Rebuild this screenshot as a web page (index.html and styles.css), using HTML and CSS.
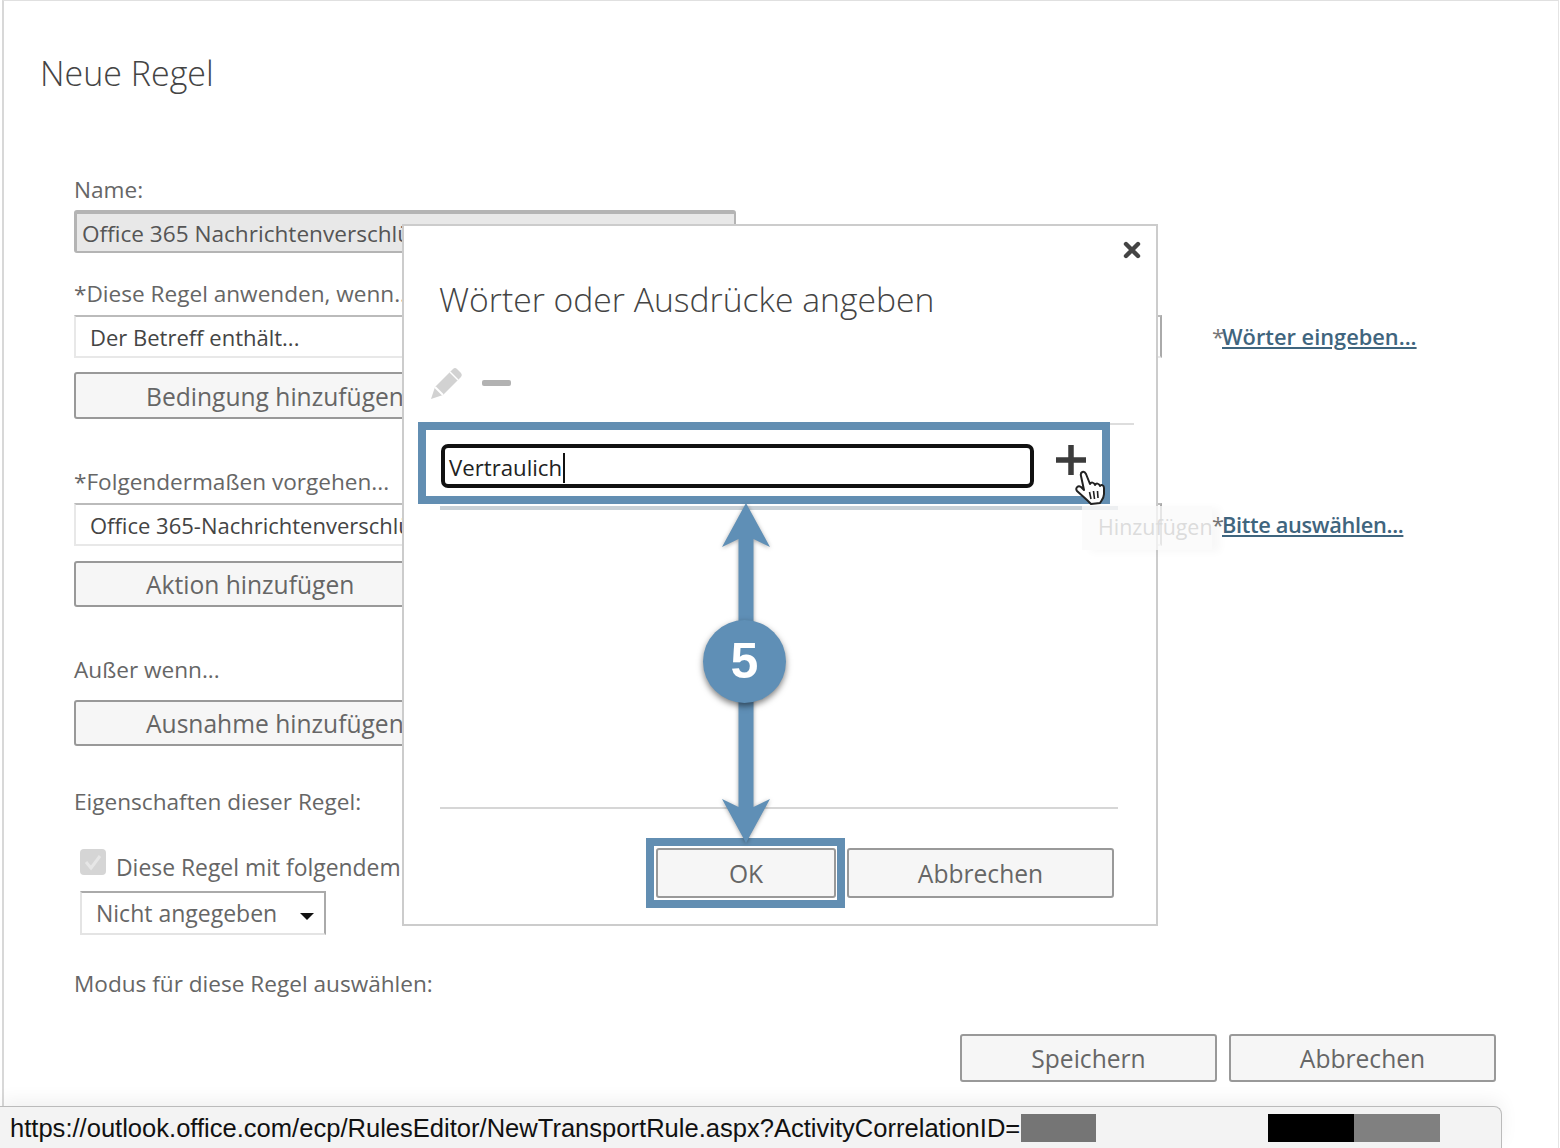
FILE: index.html
```html
<!DOCTYPE html>
<html lang="de">
<head>
<meta charset="utf-8">
<title>Neue Regel</title>
<link rel="stylesheet" href="styles.css">
</head>
<body>
<main class="page">
  <h1 class="page-title">Neue Regel</h1>
  <form class="form">
    <div class="label">Name:</div>
    <div class="name-input">Office 365 Nachrichtenverschlüsselung</div>

    <div class="label mt-26">*Diese Regel anwenden, wenn...</div>
    <div class="row">
      <div class="select">Der Betreff enthält...</div>
      <div class="link-wrap"><span class="star">*</span><a class="link">Wörter eingeben...</a></div>
    </div>
    <div class="add-btn add-tall">Bedingung hinzufügen</div>

    <div class="label mt-48">*Folgendermaßen vorgehen...</div>
    <div class="row">
      <div class="select">Office 365-Nachrichtenverschlüsselung anwenden</div>
      <div class="link-wrap"><span class="star">*</span><a class="link link-narrow">Bitte auswählen...</a></div>
    </div>
    <div class="add-btn">Aktion hinzufügen</div>

    <div class="label mt-48">Außer wenn...</div>
    <div class="add-btn">Ausnahme hinzufügen</div>

    <div class="label mt-42">Eigenschaften dieser Regel:</div>
    <div class="check-row">
      <span class="checkbox">
        <svg viewBox="0 0 26 26" width="26" height="26"><path d="M6 13l5 6 9-12" fill="none" stroke="#e6e6e6" stroke-width="3"/></svg>
      </span>
      <span class="check-label">Diese Regel mit folgendem Schweregrad überwachen:</span>
    </div>
    <div class="small-select">Nicht angegeben<span class="caret"></span></div>

    <div class="label mt-35">Modus für diese Regel auswählen:</div>
    <div class="footer">
      <div class="btn btn-save">Speichern</div>
      <div class="btn btn-cancel">Abbrechen</div>
    </div>
  </form>
</main>

<section class="dialog">
  <div class="dialog-close">
    <svg viewBox="0 0 18 18" width="18" height="18"><path d="M3 3l12 12M15 3L3 15" stroke="#444" stroke-width="4.4" stroke-linecap="round"/></svg>
  </div>
  <h2 class="dialog-title">Wörter oder Ausdrücke angeben</h2>
  <div class="toolbar">
    <svg viewBox="0 0 34 34" width="34" height="34"><path d="M1 33l4-12L23 3a3 3 0 0 1 4 0l4 4a3 3 0 0 1 0 4L13 29z" fill="#d2d2d2"/><path d="M5 21l8 8" stroke="#fff" stroke-width="2"/><path d="M20 6l8 8" stroke="#fff" stroke-width="1.5"/></svg>
    <span class="minus"></span>
  </div>
  <div class="rule"></div>
  <div class="entry-row">
    <div class="entry"><span class="entry-text">Vertraulich</span><span class="text-cursor"></span></div>
    <svg class="plus" viewBox="0 0 32 32" width="32" height="32"><path d="M16 1v30M1 16h30" stroke="#3c3c3c" stroke-width="5.500"/></svg>
  </div>
  <div class="rule-thick"></div>
  <div class="rule-bottom"></div>
  <div class="dialog-buttons">
    <div class="btn btn-ok">OK</div>
    <div class="btn btn-dlg-cancel">Abbrechen</div>
  </div>
</section>

<div class="tooltip">Hinzufügen</div>

<div class="callout callout-entry"></div>
<div class="callout callout-ok"></div>

<svg class="hand" viewBox="0 0 32 36" width="32" height="36">
  <path d="M13 30 L3 21 C1 18 4 15 7 17 L10 20 L7 6 C6 2 10 0 12 4 L16 14 C17 12 20 12 21 15 C22 13 25 13 26 16 C27 14 30 15 30 18 L30 24 C30 28 28 30 26 33 L17 34 Z" fill="#fff" stroke="#222" stroke-width="2" stroke-linejoin="round"/>
  <path d="M15.500 22l1.500 7M19.500 21l1 8M23.500 21l.5 7" stroke="#222" stroke-width="1.600"/>
</svg>

<svg class="arrow" viewBox="0 0 64 344" width="64" height="344">
  <path d="M32 2 L56 46 L39.500 38 V306 L56 298 L32 342 L8 298 L24.500 306 V38 L8 46 Z" fill="#5f8fb6"/>
</svg>
<div class="step">5</div>

<div class="statusbar">
  <span>https://outlook.office.com/ecp/RulesEditor/NewTransportRule.aspx?ActivityCorrelationID=</span>
  <span class="redact redact-a"></span>
  <span class="redact redact-b"></span>
  <span class="redact redact-c"></span>
</div>
</body>
</html>
```

FILE: styles.css
```css
* { box-sizing: border-box; }
html, body { margin: 0; padding: 0; background: #fff; }
body {
  width: 1560px;
  height: 1148px;
  overflow: hidden;
  position: relative;
  font-family: "Open Sans", "Noto Sans", sans-serif;
  font-size: 22.6px;
  color: #666;
}

.page {
  width: 1557px;
  height: 1148px;
  margin-left: 2px;
  border-left: 2px solid #d8d8d8;
  border-right: 1px solid #e4e4e4;
  border-top: 1px solid #e0e0e0;
  padding-top: 51px;
}
.page-title {
  margin: 0 0 0 36px;
  height: 44px;
  line-height: 42px;
  font-size: 34px;
  font-weight: 300;
  color: #444;
}

.form { margin: 79px 0 0 70px; }

.label { height: 30px; line-height: 29px; color: #666; white-space: nowrap; }
.mt-26 { margin-top: 26px; }
.mt-35 { margin-top: 35px; line-height: 27px; }
.mt-42 { margin-top: 42px; line-height: 27px; }
.mt-48 { margin-top: 48px; }

.name-input {
  margin-top: 5px;
  width: 662px;
  height: 43px;
  line-height: 40px;
  padding-left: 5px;
  background: #e8e8e8;
  border: 2px solid #b4b4b4;
  border-top-width: 4px;
  border-left-width: 3px;
  border-radius: 3px;
  color: #555;
  white-space: nowrap;
  overflow: hidden;
}

.row { display: flex; align-items: center; margin-top: 6px; }
.select {
  width: 1088px;
  height: 43px;
  line-height: 41px;
  padding-left: 14px;
  border-top: 2px solid #bbb;
  border-right: 2px solid #aaa;
  border-bottom: 2px solid #e8e8e8;
  border-left: 2px solid #e8e8e8;
  color: #444;
  font-size: 22px;
  white-space: nowrap;
}
.link-wrap { margin-left: 50px; white-space: nowrap; font-size: 21.8px; }
.star { color: #777; margin-right: -2px; }
.link { color: #3f657e; font-weight: 600; text-decoration: underline; }
.link-narrow { letter-spacing: -0.35px; }

.add-btn {
  margin-top: 15px;
  width: 420px;
  height: 46px;
  line-height: 44px;
  padding-left: 70px;
  background: #f6f6f6;
  border: 2px solid #999;
  border-radius: 3px;
  font-size: 24.6px;
  color: #666;
  white-space: nowrap;
  overflow: hidden;
}
.add-tall { margin-top: 14px; height: 47px; line-height: 46px; }

.check-row { display: flex; align-items: center; margin: 31px 0 0 6px; height: 32px; }
.checkbox {
  width: 26px;
  height: 26px;
  margin-top: -6px;
  background: #d5d5d5;
  border-radius: 4px;
  display: block;
}
.checkbox svg { display: block; }
.check-label { margin: 4px 0 0 10px; white-space: nowrap; color: #666; font-size: 22.9px; }

.small-select {
  margin: 10px 0 0 6px;
  width: 246px;
  height: 44px;
  line-height: 41px;
  padding-left: 14px;
  border-top: 2px solid #aaa;
  border-right: 2px solid #aaa;
  border-bottom: 2px solid #e4e4e4;
  border-left: 2px solid #e4e4e4;
  color: #666;
  font-size: 23px;
  position: relative;
}
.caret {
  position: absolute;
  right: 10px;
  top: 20px;
  border-left: 7px solid transparent;
  border-right: 7px solid transparent;
  border-top: 7px solid #111;
}

.footer { display: flex; margin: 34px 0 0 886px; gap: 12px; }
.btn {
  height: 48px;
  line-height: 45px;
  background: #f6f6f6;
  border: 2px solid #999;
  border-radius: 3px;
  text-align: center;
  font-size: 24.6px;
  color: #666;
}
.btn-save { width: 257px; }
.btn-cancel { width: 267px; }

/* dialog floats over the form */
.dialog {
  position: absolute;
  left: 402px;
  top: 224px;
  width: 756px;
  height: 702px;
  background: #fff;
  border: 2px solid #ccc;
  padding-left: 36px;
}
.dialog-close { display: flex; justify-content: flex-end; padding: 15px 15px 0 0; height: 33px; }
.dialog-title {
  margin: 18px 0 0 -1px;
  height: 44px;
  line-height: 44px;
  font-size: 33.7px;
  font-weight: 300;
  color: #444;
  white-space: nowrap;
}
.toolbar { display: flex; align-items: center; gap: 18px; margin: 45px 0 0 -10px; height: 34px; }
.toolbar svg { display: block; }
.minus { width: 29px; height: 6px; background: #b2b2b2; border-radius: 2px; }
.rule { margin-top: 23px; width: 694px; height: 2px; background: #ddd; }
.entry-row { display: flex; align-items: flex-start; margin: 19px 0 0 1px; height: 44px; }
.entry {
  width: 593px;
  height: 44px;
  padding-left: 4px;
  border: 4px solid #111;
  border-radius: 7px;
  color: #222;
  display: flex;
  align-items: center;
}
.entry-text { font-size: 22.2px; line-height: 30px; margin-top: 3px; }
.text-cursor { width: 2px; height: 30px; background: #111; margin: 3px 0 0 1px; }
.plus { margin: 0 0 0 21px; }
.rule-thick { margin-top: 18px; width: 678px; height: 4px; background: #c8d0d6; }
.rule-bottom { margin-top: 297px; width: 678px; height: 2px; background: #d6d6d6; }
.dialog-buttons { display: flex; gap: 11px; margin: 39px 0 0 216px; }
.btn-ok { width: 180px; height: 50px; line-height: 47px; }
.btn-dlg-cancel { width: 267px; height: 50px; line-height: 47px; }

.tooltip {
  position: absolute;
  left: 1082px;
  top: 506px;
  width: 130px;
  height: 44px;
  line-height: 41px;
  padding-left: 16px;
  background: rgba(250, 250, 250, 0.75);
  box-shadow: 8px 2px 8px rgba(0, 0, 0, 0.03);
  color: #dcdcdc;
  font-size: 21.4px;
  white-space: nowrap;
}
.hand { position: absolute; left: 1074px; top: 470px; }

.callout { position: absolute; border: 8px solid #628eb2; }
.callout-entry { left: 418px; top: 422px; width: 692px; height: 82px; }
.callout-ok { left: 646px; top: 838px; width: 199px; height: 70px; }

.arrow {
  position: absolute;
  left: 714px;
  top: 501px;
  filter: drop-shadow(0 1px 2px rgba(0, 0, 0, 0.35));
}
.step {
  position: absolute;
  left: 703px;
  top: 620px;
  width: 83px;
  height: 83px;
  border-radius: 50%;
  background: #5f8fb6;
  box-shadow: 0 3px 6px rgba(0, 0, 0, 0.5);
  color: #fff;
  font-family: "Liberation Sans", Arial, sans-serif;
  font-size: 50px;
  font-weight: 700;
  line-height: 83px;
  text-align: center;
}

.statusbar {
  position: absolute;
  left: 0;
  top: 1106px;
  width: 1502px;
  height: 42px;
  line-height: 42px;
  padding-left: 10px;
  background: #f3f3f3;
  border-top: 1px solid #bbb;
  border-right: 1px solid #bbb;
  border-top-right-radius: 8px;
  box-shadow: 0 -6px 18px rgba(0, 0, 0, 0.06);
  font-family: "Liberation Sans", Arial, sans-serif;
  font-size: 25.55px;
  color: #111;
  white-space: nowrap;
}
.redact { position: absolute; top: 7px; height: 28px; }
.redact-a { left: 1021px; width: 75px; background: #757575; }
.redact-b { left: 1268px; width: 86px; background: #000; }
.redact-c { left: 1354px; width: 86px; background: #808080; }
```
